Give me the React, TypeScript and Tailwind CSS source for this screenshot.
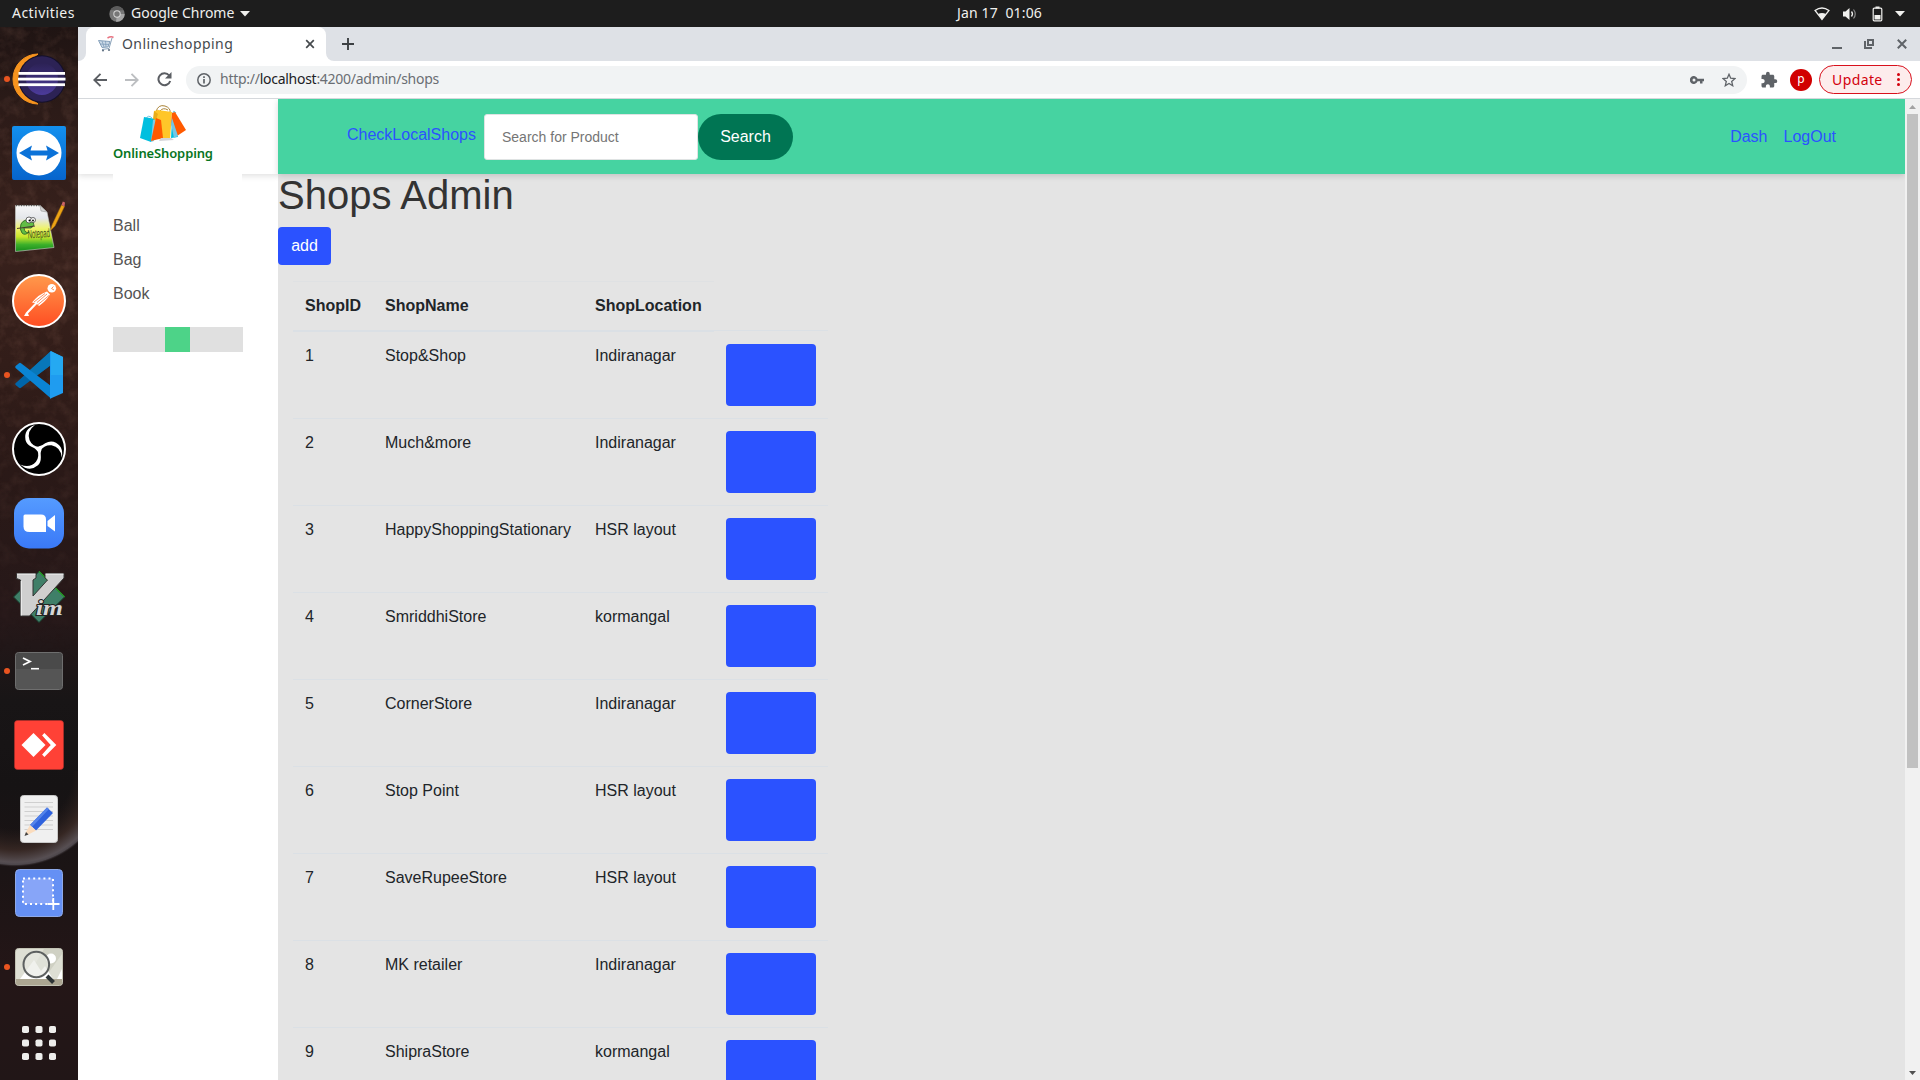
import React from "react";

const shops: [number, string, string][] = [
  [1, "Stop&Shop", "Indiranagar"],
  [2, "Much&more", "Indiranagar"],
  [3, "HappyShoppingStationary", "HSR layout"],
  [4, "SmriddhiStore", "kormangal"],
  [5, "CornerStore", "Indiranagar"],
  [6, "Stop Point", "HSR layout"],
  [7, "SaveRupeeStore", "HSR layout"],
  [8, "MK retailer", "Indiranagar"],
  [9, "ShipraStore", "kormangal"],
];

const Icon = ({ children }: { children: React.ReactNode }) => (
  <svg width="54" height="54" viewBox="0 0 54 54">
    {children}
  </svg>
);

const Eclipse = () => (
  <Icon>
    <defs>
      <linearGradient id="ecl" x1="0" y1="0" x2="0" y2="1">
        <stop offset="0" stopColor="#2c2255" />
        <stop offset="1" stopColor="#4c3b9b" />
      </linearGradient>
    </defs>
    <path d="M26 2A25 25 0 0 0 26 52A30 30 0 0 1 26 2Z" fill="#f7941e" stroke="#f7941e" strokeWidth="1" />
    <circle cx="30" cy="27" r="23.800" fill="#14102b" />
    <circle cx="30" cy="27" r="22.700" fill="#2c2255" />
    <circle cx="30" cy="27" r="16" fill="url(#ecl)" />
    <rect x="6.500" y="20" width="46.500" height="2.800" fill="#fff" />
    <rect x="6" y="25.700" width="47.500" height="2.800" fill="#fff" />
    <rect x="6.500" y="31.300" width="46.500" height="2.800" fill="#fff" />
  </Icon>
);

const TeamViewer = () => (
  <Icon>
    <defs>
      <linearGradient id="tv" x1="0" y1="0" x2="0" y2="1">
        <stop offset="0" stopColor="#1390ee" />
        <stop offset="1" stopColor="#0664cc" />
      </linearGradient>
    </defs>
    <rect width="54" height="54" rx="2" fill="url(#tv)" />
    <circle cx="27" cy="27" r="22.500" fill="#fff" />
    <path d="M7 27L20 19.500L18.500 24.500H35.500L34 19.500L47 27L34 34.500L35.500 29.500H18.500L20 34.500Z" fill="#0b72d8" />
  </Icon>
);

const Notepad = () => (
  <Icon>
    <defs>
      <linearGradient id="np" x1="0" y1="0" x2="0" y2="1">
        <stop offset="0" stopColor="#f7f7f7" />
        <stop offset="0.280" stopColor="#e4e6ea" />
        <stop offset="0.500" stopColor="#eef36a" />
        <stop offset="0.680" stopColor="#c8e72a" />
        <stop offset="0.850" stopColor="#3cb02a" />
        <stop offset="1" stopColor="#158c1c" />
      </linearGradient>
    </defs>
    <path d="M3.500 5.500L28 5.500L35 12L42 47.500L3.500 51.500Z" fill="url(#np)" stroke="#c9cfc9" strokeWidth="0.600" />
    <path d="M28 5.500L29 11L35 12Z" fill="#d5d5d5" stroke="#888" strokeWidth="0.500" />
    <path d="M4 5.500H28" stroke="#555" strokeWidth="1.400" strokeDasharray="1 1.500" />
    <path d="M9 24Q12 18 20 21Q24 25 19 28L12 28Q13 34 17 32Q13 36 10 33Q7 29 9 24Z" fill="#62bd45" stroke="#245f20" strokeWidth="0.800" />
    <path d="M5 28.500L23 26" stroke="#4a2b2b" strokeWidth="0.900" />
    <circle cx="17" cy="20" r="3" fill="#fff" stroke="#333" strokeWidth="0.700" />
    <circle cx="21" cy="20" r="2.500" fill="#fff" stroke="#333" strokeWidth="0.700" />
    <circle cx="17.500" cy="20.500" r="1" />
    <circle cx="21" cy="20.500" r="0.900" />
    <g transform="translate(16 38.500) rotate(-4) scale(0.650 1.350)">
      <text x="0" y="0" fontSize="9" fontFamily="Liberation Sans" fill="#3b4a20">Notepad</text>
    </g>
    <path d="M38.500 30.500L40 25L49.500 5L52.500 6.500L43 26Z" fill="#eca416" stroke="#a66a0a" strokeWidth="0.500" />
    <path d="M49.500 5L50.800 1.500L53 2.500L52.500 6.500Z" fill="#c66" />
  </Icon>
);

const Postman = () => (
  <Icon>
    <defs>
      <linearGradient id="pm" x1="0" y1="0" x2="0" y2="1">
        <stop offset="0" stopColor="#ff9a4c" />
        <stop offset="1" stopColor="#ff4d22" />
      </linearGradient>
    </defs>
    <circle cx="27" cy="27" r="26" fill="url(#pm)" stroke="#fff" strokeWidth="2" />
    <circle cx="39.800" cy="14.300" r="4.300" fill="#fff" />
    <path d="M41.500 12.500L39.500 14.500L42 16" stroke="#ff8040" strokeWidth="0.900" fill="none" />
    <path d="M35 17.500L38 20.500Q34 27 27 32L25 30L16 39.500L17 42L12 42L14 38.500L23 29L20 28.500Q27 20 35 17.500Z" fill="#fff" />
    <path d="M35 20L25 28.500M37 21.500L25.500 31M33 19.500L22 28" stroke="#ff7338" strokeWidth="0.800" />
  </Icon>
);

const VSCode = () => (
  <Icon>
    <path d="M39 3L3.600 35.200Q2.800 36 3.600 37L7 39.800Q8 40.600 9 39.800L39 17Z" fill="#0065a9" />
    <path d="M39 3L18 22L24 28L39 17Z" fill="#0877b9" />
    <path d="M3.600 18L7 15.200Q8 14.400 9 15.200L39 38V50.600L3.600 20Q2.800 19 3.600 18Z" fill="#0a84d4" />
    <path d="M38 3.200L51 9V45L38 50.800Z" fill="#1f9cf0" />
    <path d="M39 3L51 9V27H39Z" fill="#25a9f2" />
  </Icon>
);

const Obs = () => (
  <Icon>
    <circle cx="27" cy="27" r="26" fill="#000" stroke="#fff" strokeWidth="2" />
    {[0, 120, 240].map((a) => (
      <g key={a} transform={`rotate(${a} 27 27)`}>
        <path d="M27 25Q20 24 17.500 18Q14.500 9 23 3Q11.500 7 13.500 18Q14.500 22 19 24.500Q23 26 25 28.500Z" fill="#fff" />
      </g>
    ))}
    <circle cx="27" cy="27" r="2.500" fill="#fff" />
  </Icon>
);

const Zoom = () => (
  <Icon>
    <defs>
      <linearGradient id="zm" x1="0" y1="0" x2="0" y2="1">
        <stop offset="0" stopColor="#559bff" />
        <stop offset="1" stopColor="#3a79f7" />
      </linearGradient>
    </defs>
    <rect x="2" y="2" width="50" height="50.500" rx="15" fill="url(#zm)" />
    <path d="M13 18.500H29Q34 18.500 34 23.500V36H17.500Q11.500 36 11.500 30.500V20Q11.500 18.500 13 18.500Z" fill="#fff" />
    <path d="M35.500 25L43 19V35.500L35.500 30Z" fill="#fff" />
  </Icon>
);

const Vim = () => (
  <Icon>
    <path d="M27 1.500L52.500 27L27 52.500L1.500 27Z" fill="#3f7f68" stroke="#163c2b" strokeWidth="1" />
    <path d="M27 1.500L52.500 27" stroke="#27a327" strokeWidth="1.200" />
    <path d="M4.500 3.500H24V8L21 10V26L35.500 10L33 8V3.500H52V8L17.500 46H8.500L8.500 10L4.500 8.500Z" fill="#cfcfcf" stroke="#333" strokeWidth="1" />
    <path d="M5 4H23.500M33.500 4H51.500M9.200 11V45.500" stroke="#f5f5f5" strokeWidth="1" />
    <text x="24" y="45" fontSize="22" fontFamily="Liberation Serif" fontWeight="bold" fontStyle="italic" textLength="27" lengthAdjust="spacingAndGlyphs" fill="#d6d6d6" stroke="#222" strokeWidth="2" paintOrder="stroke">im</text>
  </Icon>
);

const Terminal = () => (
  <Icon>
    <rect x="3.500" y="8.500" width="47" height="37" rx="3" fill="#555" stroke="#6e6e6e" />
    <path d="M4 25V12Q4 9 7 9H47Q50 9 50 12V25Z" fill="#4a4a4a" />
    <path d="M11 14L18 17.500L11 21" stroke="#fff" strokeWidth="1.800" fill="none" />
    <path d="M19 24.700H27" stroke="#fff" strokeWidth="1.600" />
  </Icon>
);

const AnyDesk = () => (
  <Icon>
    <rect x="2.500" y="2.500" width="49" height="49" rx="3" fill="#ff4136" stroke="#b92f2a" strokeWidth="0.600" />
    <path d="M31 16.500L41.500 27L31 37.500" stroke="#fff" strokeWidth="4" fill="none" />
    <path d="M27 15.500L37 27L27 38.500" stroke="#ff4136" strokeWidth="2.200" fill="none" />
    <path d="M21.500 15L33.500 27L21.500 39L9.500 27Z" fill="#fff" />
  </Icon>
);

const Editor = () => (
  <Icon>
    <rect x="8.500" y="3.500" width="37" height="47" rx="3" fill="#f0f0f0" stroke="#c8c8c8" />
    <path d="M12.500 10.500H41M12.500 15H41M12.500 19.500H41M12.500 24H41M12.500 28.500H41M12.500 33H41M12.500 37.500H41" stroke="#cfcfcf" />
    <path d="M18 33L35 15.500L41 21L24 38.500Z" fill="#2f62dd" />
    <path d="M18 33L35 15.500L37 17L20 35Z" fill="#5483ea" />
    <path d="M18 33L24 38.500L15.500 43L13 43L14 40Z" fill="#fbdcbd" />
    <path d="M14 40L16.500 42.500L12.500 44Z" fill="#444" />
  </Icon>
);

const Screenshot = () => (
  <Icon>
    <rect x="3.500" y="3.500" width="47" height="47" rx="4" fill="#6590f4" stroke="#8ea9e8" />
    <rect x="11" y="12.500" width="30" height="25.500" fill="#87a5f8" stroke="#fff" strokeWidth="2" strokeDasharray="2 3.100" />
    <path d="M41.300 32V44M35.500 38H47.500" stroke="#fff" strokeWidth="1.800" />
  </Icon>
);

const Viewer = () => (
  <Icon>
    <rect x="3.500" y="8.500" width="47" height="37" rx="3" fill="#dedfd4" stroke="#c3c3b5" />
    <path d="M32 9H47Q50 9 50 12V14L32 39H14Z" fill="#cfd0c3" />
    <circle cx="39" cy="18.500" r="5" fill="#fff" />
    <path d="M8 39L22 20L29 31L33 26L41 39Z" fill="#fff" />
    <path d="M50 29V39H45Z" fill="#fff" />
    <path d="M4 39H50V43Q50 45 47 45H7Q4 45 4 43Z" fill="#aca692" />
    <circle cx="24.300" cy="24.500" r="12.800" fill="#e8e9e4" fillOpacity="0.650" stroke="#5d6060" strokeWidth="2" />
    <path d="M35 36L41.500 42.500" stroke="#2e3436" strokeWidth="4" />
  </Icon>
);

const AppsGrid = () => (
  <Icon>
    {[10, 23.500, 37].map((y) =>
      [10, 23.500, 37].map((x) => <rect key={`${x}-${y}`} x={x} y={y + 2} width="7" height="7" rx="1.800" fill="#eeeeec" />)
    )}
  </Icon>
);

const dock: [React.FC, boolean][] = [
  [Eclipse, true],
  [TeamViewer, false],
  [Notepad, false],
  [Postman, false],
  [VSCode, true],
  [Obs, false],
  [Zoom, false],
  [Vim, false],
  [Terminal, true],
  [AnyDesk, false],
  [Editor, false],
  [Screenshot, false],
  [Viewer, true],
  [AppsGrid, false],
];

const Wallpaper = () => (
  <svg className="absolute inset-0" width="78" height="1053" viewBox="0 0 78 1053" preserveAspectRatio="none">
    <defs>
      <linearGradient id="wall" x1="0" y1="0" x2="0" y2="1">
        <stop offset="0" stopColor="#1f1413" />
        <stop offset="0.080" stopColor="#2c1b18" />
        <stop offset="0.200" stopColor="#38211c" />
        <stop offset="0.320" stopColor="#321d19" />
        <stop offset="0.420" stopColor="#2a1917" />
        <stop offset="0.560" stopColor="#261819" />
        <stop offset="0.640" stopColor="#181516" />
        <stop offset="0.720" stopColor="#161314" />
        <stop offset="0.800" stopColor="#1b1415" />
        <stop offset="0.900" stopColor="#241617" />
        <stop offset="1" stopColor="#211617" />
      </linearGradient>
      <radialGradient id="limb" cx="15" cy="744" r="96" gradientUnits="userSpaceOnUse">
        <stop offset="0.600" stopColor="#2e211d" stopOpacity="0" />
        <stop offset="0.820" stopColor="#3c2b26" stopOpacity="0.800" />
        <stop offset="0.950" stopColor="#5a5256" stopOpacity="0.950" />
        <stop offset="0.975" stopColor="#565055" stopOpacity="0.850" />
        <stop offset="1" stopColor="#2a2022" stopOpacity="0" />
      </radialGradient>
      <linearGradient id="fade" x1="0" y1="0" x2="0" y2="1">
        <stop offset="0.500" stopColor="#fff" />
        <stop offset="1" stopColor="#000" />
      </linearGradient>
      <mask id="fadeMask">
        <rect width="78" height="640" fill="url(#fade)" />
      </mask>
      <filter id="grain" x="0" y="0" width="100%" height="100%">
        <feTurbulence type="fractalNoise" baseFrequency="0.080 0.080" numOctaves="4" seed="8" />
        <feColorMatrix values="0 0 0 0 0.450  0 0 0 0 0.220  0 0 0 0 0.160  1.600 0 0 0 -0.650" />
      </filter>
    </defs>
    <rect width="78" height="1053" fill="url(#wall)" />
    <g mask="url(#fadeMask)"><rect width="78" height="640" filter="url(#grain)" opacity="0.220" /></g>
    <rect y="744" width="78" height="110" fill="url(#limb)" />
  </svg>
);

const Dock = () => (
  <aside className="relative w-[78px] shrink-0 overflow-hidden bg-[#241718]">
    <Wallpaper />
    <div className="relative flex flex-col pt-[15px]">
      {dock.map(([Glyph, running], i) => (
        <div key={i} className="flex h-[74px] items-center">
          <span className="flex w-3 pl-1">{running && <span className="size-1.5 rounded-full bg-[#e95420]" />}</span>
          <Glyph />
        </div>
      ))}
    </div>
  </aside>
);

const TopBar = () => (
  <header className="grid h-[27px] grid-cols-[957px_auto_1fr] items-center bg-[#1d1d1d] font-['Noto_Sans',sans-serif] text-[14px] leading-[26px] text-[#f0f0ee]">
    <div className="flex items-center pl-3">
      <span className="w-[97px] pb-px tracking-[0.45px]">Activities</span>
      <svg width="16" height="16" viewBox="0 0 16 16">
        <circle cx="8" cy="8" r="7.700" fill="#777" />
        <path d="M8 8L15.700 8A7.700 7.700 0 0 1 7 15.700Z" fill="#a5a5a5" />
        <path d="M1.500 4A7.700 7.700 0 0 1 14.600 4.200L8 4.500Z" fill="#5c5c5c" />
        <circle cx="8" cy="8" r="3.700" fill="#d8d8d8" />
        <circle cx="8" cy="8" r="2.700" fill="#777" />
      </svg>
      <span className="ml-1.5 w-[104px] whitespace-nowrap pb-px">Google Chrome</span>
      <svg className="ml-[5px]" width="10" height="6"><path d="M0 0H10L5 5.500Z" fill="#f0f0ee" /></svg>
    </div>
    <div className="whitespace-pre pb-px tracking-[0.15px]">Jan 17  01:06</div>
    <div className="flex items-center justify-end pr-[15px]">
      <svg width="16" height="14" viewBox="0 0 16 14">
        <path d="M1 3.500Q8 -1.500 15 3.500L8 12.500Z" fill="none" stroke="#f0f0ee" strokeWidth="1.300" />
        <path d="M4 7Q8 5 12 7L8 12.500Z" fill="#f0f0ee" />
      </svg>
      <svg className="ml-3" width="16" height="14" viewBox="0 0 16 14">
        <path d="M1 4.500H3.500L7.500 1V13L3.500 9.500H1Z" fill="#f0f0ee" />
        <path d="M9.500 4.500Q11.500 7 9.500 9.500" stroke="#f0f0ee" strokeWidth="1.300" fill="none" />
        <path d="M11.500 2.500Q15 7 11.500 11.500" stroke="#888" strokeWidth="1.200" fill="none" />
      </svg>
      <svg className="ml-[14px]" width="11" height="16" viewBox="0 0 11 16">
        <rect x="1.200" y="2.200" width="8.600" height="12.600" rx="1" fill="none" stroke="#f0f0ee" strokeWidth="1.200" />
        <rect x="3.500" y="0.500" width="4" height="2" fill="#f0f0ee" />
        <rect x="2.500" y="9" width="6" height="4.500" fill="#f0f0ee" />
      </svg>
      <svg className="ml-3" width="10" height="6"><path d="M0 0H10L5 5.500Z" fill="#f0f0ee" /></svg>
    </div>
  </header>
);

const TabStrip = () => (
  <div className="flex h-[34px] bg-[#dee1e6]">
    <div className="flex w-2 items-end bg-white"><span className="h-full w-2 rounded-br-lg bg-[#dee1e6]" /></div>
    <div className="flex w-60 items-center rounded-t-lg bg-white pl-3 pr-[11px]">
      <svg width="16" height="17" viewBox="0 0 16 17">
        <path d="M0.500 4.500L12 5.500L10 11L4 11.500Z" fill="#c9d8e6" stroke="#7d9ab5" strokeWidth="0.900" />
        <path d="M4 5L6 11M7.500 5L8 11M2 8L11 8.500" stroke="#6f8fae" strokeWidth="0.600" />
        <path d="M9.500 2Q13 0 15.500 1.500" stroke="#e8717f" strokeWidth="1.500" fill="none" />
        <path d="M14 2L11 12.500L4 13.500" stroke="#8ba3ba" strokeWidth="1" fill="none" />
        <circle cx="5" cy="14.500" r="1.100" fill="#678" />
        <circle cx="11" cy="14" r="1.100" fill="#678" />
      </svg>
      <span className="ml-2 flex-1 pb-0.5 font-['Noto_Sans',sans-serif] text-[14px] tracking-[0.42px] text-[#45494d]">Onlineshopping</span>
      <svg width="10" height="10" viewBox="0 0 10 10"><path d="M1.200 1.200L8.800 8.800M8.800 1.200L1.200 8.800" stroke="#45494d" strokeWidth="1.700" /></svg>
    </div>
    <div className="w-2 bg-white"><div className="h-full rounded-bl-lg bg-[#dee1e6]" /></div>
    <div className="flex flex-1 items-center justify-between pl-2 pr-[13px]">
      <svg width="12" height="12" viewBox="0 0 12 12"><path d="M6 0V12M0 6H12" stroke="#3c4043" strokeWidth="1.900" /></svg>
      <div className="flex items-center">
        <svg width="10" height="10"><rect y="8" width="10" height="2" fill="#5f6368" /></svg>
        <svg className="ml-[22px]" width="10" height="10" viewBox="0 0 10 10">
          <path d="M4 1H9V6H4Z M1 2V9H8" fill="none" stroke="#5f6368" strokeWidth="2" />
        </svg>
        <svg className="ml-[23px]" width="10" height="10" viewBox="0 0 10 10"><path d="M0.800 0.800L9.200 9.200M9.200 0.800L0.800 9.200" stroke="#5f6368" strokeWidth="2" /></svg>
      </div>
    </div>
  </div>
);

const Toolbar = () => (
  <div className="flex h-[38px] items-center border-b border-[#d5d8dc] bg-white pl-[15px] pr-2">
    <svg width="14" height="14" viewBox="0 0 14 14"><path d="M14 7H1.500M7.500 0.800L1.300 7L7.500 13.200" fill="none" stroke="#5b5e63" strokeWidth="1.900" /></svg>
    <svg className="ml-[18px]" width="14" height="14" viewBox="0 0 14 14"><path d="M0 7H12.500M6.500 0.800L12.700 7L6.500 13.200" fill="none" stroke="#bcbec1" strokeWidth="1.900" /></svg>
    <svg className="ml-[18px]" width="15" height="15" viewBox="0 0 15 15">
      <path d="M12.200 3.500A6 6 0 1 0 13.200 9" fill="none" stroke="#5b5e63" strokeWidth="2" />
      <path d="M14.500 0V6.500H8Z" fill="#5b5e63" />
    </svg>
    <div className="ml-[14px] flex h-7 flex-1 items-center rounded-full bg-[#f1f3f4] pl-[11px] pr-[11px]">
      <svg width="14" height="14" viewBox="0 0 14 14">
        <circle cx="7" cy="7" r="6.200" fill="none" stroke="#5f6368" strokeWidth="1.500" />
        <path d="M7 6V10.500M7 3.300V5" stroke="#5f6368" strokeWidth="1.700" />
      </svg>
      <span className="ml-[9px] flex-1 pb-0.5 font-['Noto_Sans',sans-serif] text-[14px] tracking-[-0.27px] text-[#6a6e73]">
        http://<span className="text-[#202124]">localhost</span>:4200/admin/shops
      </span>
      <svg width="14" height="8" viewBox="0 0 14 8">
        <path d="M7.600 2.700A4 4 0 1 0 7.600 5.300H10V7.500H12.500V5.300H14V2.700ZM4 5.500A1.500 1.500 0 1 1 4 2.500A1.500 1.500 0 0 1 4 5.500Z" fill="#5f6368" fillRule="evenodd" />
      </svg>
      <svg className="ml-[18px]" width="14" height="14" viewBox="0 0 14 14">
        <path d="M7 1.300L8.700 5.200L13 5.600L9.700 8.400L10.700 12.700L7 10.400L3.300 12.700L4.300 8.400L1 5.600L5.300 5.200Z" fill="none" stroke="#5f6368" strokeWidth="1.300" />
      </svg>
    </div>
    <svg className="ml-[13px]" width="18" height="18" viewBox="0 0 24 24">
      <path d="M20.500 11H19V7c0-1.100-.9-2-2-2h-4V3.500a2.500 2.500 0 0 0-5 0V5H4c-1.100 0-1.990.9-1.990 2v3.800H3.500c1.490 0 2.700 1.210 2.700 2.700s-1.210 2.700-2.700 2.700H2V20c0 1.100.9 2 2 2h3.800v-1.500c0-1.490 1.210-2.700 2.700-2.700s2.700 1.210 2.700 2.700V22H17c1.100 0 2-.9 2-2v-4h1.500a2.500 2.500 0 0 0 0-5z" fill="#5f6368" />
    </svg>
    <span className="ml-[12px] flex size-[22px] items-center justify-center rounded-full bg-[#d10000] pb-0.5 font-['Noto_Sans',sans-serif] text-[12px] text-white">p</span>
    <div className="ml-[7px] flex h-[29px] w-[93px] items-center rounded-full border border-[#d8101c] bg-[#fdecec] pl-3 pr-[11px] font-['Noto_Sans',sans-serif] text-[14px] text-[#d3000c]">
      <span className="flex-1 tracking-[0.4px]">Update</span>
      <span className="flex flex-col gap-0.5">
        <i className="size-[3px] rounded-full bg-[#d3000c]" />
        <i className="size-[3px] rounded-full bg-[#d3000c]" />
        <i className="size-[3px] rounded-full bg-[#d3000c]" />
      </span>
    </div>
  </div>
);

const ShopLogo = () => (
  <svg width="106" height="64" viewBox="0 0 106 64">
    <path d="M43 7Q45 -1 52 1Q58 3 57 8M47 6Q50 2 55 5" fill="none" stroke="#a98236" strokeWidth="1" />
    <path d="M33 14Q35 9 39 13M60 9Q60 4 63 8" fill="none" stroke="#5bbdd8" strokeWidth="0.900" />
    <path d="M31 12L43 14L38 37L27 33Z" fill="#00bfdf" />
    <path d="M40 15L43 14L41 36L38 37Z" fill="#7fcbe6" />
    <path d="M41 6L45 5L59 7L57 35L44 34Z" fill="#ffc629" />
    <path d="M41 6L45 9L43 15L40 14Z" fill="#e8ad19" />
    <path d="M43 13L48 15L50 33L38 36Z" fill="#ff5a00" />
    <path d="M48 33L58 33L61 35L46 36Z" fill="#d3d3d8" />
    <path d="M59 15L65 32L58 33Z" fill="#00bfdf" />
    <path d="M59 8L62 7L73 25L64 31L58 19Z" fill="#ff5a00" />
    <path d="M59 13L65 31L61 33L58 19Z" fill="#72c7e5" />
    <text x="0" y="53" fontFamily="Noto Sans, sans-serif" fontWeight="600" fontSize="13" textLength="100" lengthAdjust="spacing" fill="#08751f">OnlineShopping</text>
  </svg>
);

const Sidebar = () => (
  <nav className="flex w-[200px] shrink-0 flex-col bg-white">
    <div className="h-[75px] pl-[35px] pt-[6px] shadow-[0_2px_6px_rgba(0,0,0,0.12)]"><ShopLogo /></div>
    <div className="relative ml-[35px] h-[266px] w-[129px] bg-white">
      <ul className="pt-[35px] text-[16px] leading-[34px] text-[#545454]">
        <li>Ball</li>
        <li>Bag</li>
        <li>Book</li>
      </ul>
      <div className="mt-[16px] flex h-[25px] w-[130px] bg-[#e0e0e0] pl-[52px]"><span className="w-[25px] bg-[#4dd388]" /></div>
    </div>
  </nav>
);

const ShopTable = () => (
  <table className="ml-[15px] mt-4 w-[535px] table-fixed border-collapse text-[16px] leading-6 text-[#212529]">
    <colgroup>
      <col className="w-[80px]" />
      <col className="w-[210px]" />
      <col className="w-[131px]" />
      <col className="w-[114px]" />
    </colgroup>
    <thead>
      <tr className="h-[49px] text-left">
        {["ShopID", "ShopName", "ShopLocation"].map((h) => (
          <th key={h} className="border-b-2 border-t border-b-[#dbe0e5] border-t-[#dfe1e3] px-3 font-bold">{h}</th>
        ))}
      </tr>
    </thead>
    <tbody>
      {shops.map(([id, name, place]) => (
        <tr key={id} className="h-[87px] border-t border-[#dbe0e5] align-top first:h-[88px]">
          <td className="px-3 pt-3">{id}</td>
          <td className="px-3 pt-3">{name}</td>
          <td className="px-3 pt-3">{place}</td>
          <td className={id === 1 ? "px-3 pt-[13px]" : "px-3 pt-3"}><button className="block h-[62px] w-[90px] rounded bg-[#2b52ff]" /></td>
        </tr>
      ))}
    </tbody>
  </table>
);

const Content = () => (
  <main className="flex min-w-0 flex-1 flex-col bg-[#e4e4e4]">
    <div className="flex h-[75px] shrink-0 items-center justify-between bg-[#46d3a1] pl-[69px] pr-[69px] text-[16px] text-[#2b52ff] shadow-[0_2px_6px_rgba(0,0,0,0.15)]">
      <div className="flex items-center">
        <a className="w-[137px] pb-1">CheckLocalShops</a>
        <input className="h-[46px] w-[214px] rounded-[3px] border border-[#dfe3e3] bg-white px-[17px] text-[14px] placeholder:text-[#757575]" placeholder="Search for Product" />
        <button className="h-[46px] w-[95px] rounded-full bg-[#007553] text-white">Search</button>
      </div>
      <div className="flex gap-4">
        <a>Dash</a>
        <a>LogOut</a>
      </div>
    </div>
    <h1 className="h-[53px] shrink-0 text-[40px] leading-[42px] text-[#333]">Shops Admin</h1>
    <button className="h-[38px] w-[53px] shrink-0 rounded bg-[#2b52ff] text-[16px] text-white">add</button>
    <ShopTable />
  </main>
);

const Scrollbar = () => (
  <div className="flex w-[15px] shrink-0 flex-col items-center bg-[#f1f1f1]">
    <div className="flex h-[15px] items-center"><svg width="7" height="4"><path d="M3.500 0L7 4H0Z" fill="#a3a3a3" /></svg></div>
    <div className="h-[654px] w-[11px] bg-[#c1c1c1]" />
    <div className="mt-auto flex h-[15px] items-center"><svg width="7" height="4"><path d="M0 0H7L3.500 4Z" fill="#505050" /></svg></div>
  </div>
);

export default function App() {
  return (
    <div className="flex h-[1080px] w-[1920px] flex-col overflow-hidden font-['Liberation_Sans',sans-serif]">
      <TopBar />
      <div className="flex min-h-0 flex-1">
        <Dock />
        <div className="flex min-w-0 flex-1 flex-col">
          <TabStrip />
          <Toolbar />
          <div className="flex min-h-0 flex-1 overflow-hidden">
            <Sidebar />
            <Content />
            <Scrollbar />
          </div>
        </div>
      </div>
    </div>
  );
}
